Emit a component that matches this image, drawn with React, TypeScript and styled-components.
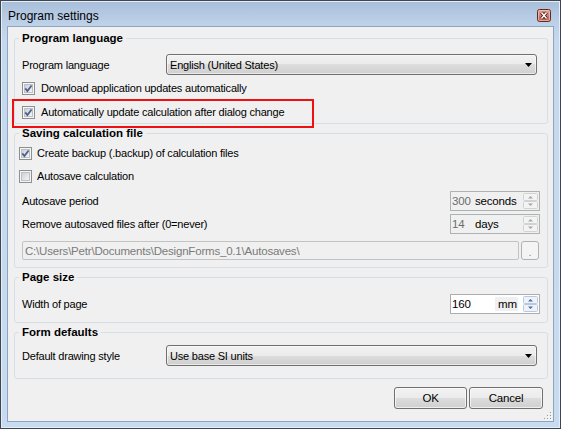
import styled, { createGlobalStyle } from "styled-components";

const GlobalStyle = createGlobalStyle`
  html, body {
    margin: 0;
    padding: 0;
    background: #ffffff;
  }
  body {
    font-family: "Liberation Sans", Arial, sans-serif;
    font-size: 11px;
    letter-spacing: -0.2px;
    color: #000000;
  }
`;

function CheckBox({ checked }: { checked: boolean }) {
  return (
    <svg width="13" height="13" viewBox="0 0 13 13">
      <defs>
        <linearGradient id="cbInner" x1="0" y1="0" x2="1" y2="1">
          <stop offset="0" stopColor="#c9cdd3" />
          <stop offset="1" stopColor="#f7f7f7" />
        </linearGradient>
      </defs>
      <rect x="0.5" y="0.5" width="12" height="12" fill="#f5f5f5" stroke="#8e8f8f" />
      <rect x="2.5" y="2.5" width="8" height="8" fill="url(#cbInner)" stroke="#bcc1c7" />
      {checked && (
        <path d="M3.3 6.4 L5.4 9 L9.6 3.4" fill="none" stroke="#4a5e8c" strokeWidth="1.7" />
      )}
    </svg>
  );
}

function SpinButtons({ active }: { active: boolean }) {
  const arrow = active ? "#4b6aa6" : "#a6a6a6";
  const edge = active ? "#b9c9dd" : "#d2d2d2";
  const fill = active ? "#eef3fa" : "#f3f3f3";
  return (
    <svg width="15" height="16" viewBox="0 0 15 16">
      <rect x="0.5" y="0.5" width="14" height="7" rx="1" fill={fill} stroke={edge} />
      <rect x="0.5" y="8.5" width="14" height="7" rx="1" fill={fill} stroke={edge} />
      <path d="M5 5.5 L10 5.5 L7.5 3 Z" fill={arrow} />
      <path d="M5 10.5 L10 10.5 L7.5 13 Z" fill={arrow} />
    </svg>
  );
}

function CloseGlyph() {
  return (
    <svg width="14" height="13" viewBox="0 0 14 13">
      <defs>
        <linearGradient id="closeFill" x1="0" y1="0" x2="0" y2="1">
          <stop offset="0" stopColor="#e6a497" />
          <stop offset="0.5" stopColor="#d27a6b" />
          <stop offset="1" stopColor="#c45c4c" />
        </linearGradient>
      </defs>
      <rect x="0.5" y="0.5" width="13" height="12" rx="2" fill="url(#closeFill)" stroke="#5d2a24" />
      <rect x="1.5" y="1.5" width="11" height="10" rx="1" fill="none" stroke="#f1c8c0" strokeOpacity="0.7" />
      <path d="M4.5 3.5 L9.5 9.5 M9.5 3.5 L4.5 9.5" stroke="#3b1713" strokeWidth="3.2" />
      <path d="M4.5 3.5 L9.5 9.5 M9.5 3.5 L4.5 9.5" stroke="#ffffff" strokeWidth="1.5" />
    </svg>
  );
}

function Grip() {
  const dots = [
    [6, 0],
    [3, 3], [6, 3],
    [0, 6], [3, 6], [6, 6],
  ];
  return (
    <svg width="8" height="8" viewBox="0 0 8 8">
      {dots.map(([x, y]) => (
        <g key={`${x}-${y}`}>
          <rect x={x + 1} y={y + 1} width="1" height="1" fill="#ffffff" />
          <rect x={x} y={y} width="1" height="1" fill="#9a9a9a" />
        </g>
      ))}
    </svg>
  );
}

function DropArrow() {
  return (
    <svg width="7" height="4" viewBox="0 0 7 4">
      <path d="M0 0 L7 0 L3.5 4 Z" fill="#000000" />
    </svg>
  );
}

interface SpinProps {
  value: string;
  unit: string;
  disabled?: boolean;
}

function Spin({ value, unit, disabled }: SpinProps) {
  return (
    <SpinBox $disabled={!!disabled}>
      <SpinValue $disabled={!!disabled}>{value}</SpinValue>
      <SpinUnit $boxed={!disabled}>{unit}</SpinUnit>
      <SpinButtons active={!disabled} />
    </SpinBox>
  );
}

export default function App() {
  return (
    <>
      <GlobalStyle />
      <Window>
        <TitleBar>
          <Title>Program settings</Title>
          <CloseButton>
            <CloseGlyph />
          </CloseButton>
        </TitleBar>
        <Client>
          <Group $mt={4} $pb={2}>
            <Legend>Program language</Legend>
            <Row $mt={9} $h={21}>
              <Label $w={147}>Program language</Label>
              <Select>
                <span>English (United States)</span>
                <DropArrow />
              </Select>
            </Row>
            <CheckRow $mt={4} $indent={3} $gap={6}>
              <CheckBox checked />
              <span>Download application updates automatically</span>
            </CheckRow>
            <CheckRow $mt={6} $indent={3} $gap={6} $marked>
              <CheckBox checked />
              <span>Automatically update calculation after dialog change</span>
            </CheckRow>
          </Group>

          <Group $mt={2} $pb={7}>
            <Legend>Saving calculation file</Legend>
            <CheckRow $mt={4} $indent={0} $gap={5}>
              <CheckBox checked />
              <span>Create backup (.backup) of calculation files</span>
            </CheckRow>
            <CheckRow $mt={5} $indent={0} $gap={5}>
              <CheckBox checked={false} />
              <span>Autosave calculation</span>
            </CheckRow>
            <Row $mt={6} $h={20}>
              <Label>Autosave period</Label>
              <Spin value="300" unit="seconds" disabled />
            </Row>
            <Row $mt={3} $h={20}>
              <Label>Remove autosaved files after (0=never)</Label>
              <Spin value="14" unit="days" disabled />
            </Row>
            <Row $mt={7} $h={19}>
              <PathBox>{"C:\\Users\\Petr\\Documents\\DesignForms_0.1\\Autosaves\\"}</PathBox>
              <BrowseButton>.</BrowseButton>
            </Row>
          </Group>

          <Group $mt={2} $pb={8}>
            <Legend>Page size</Legend>
            <Row $mt={10} $h={20}>
              <Label>Width of page</Label>
              <Spin value="160" unit="mm" />
            </Row>
          </Group>

          <Group $mt={2} $pb={12}>
            <Legend>Form defaults</Legend>
            <Row $mt={6} $h={21}>
              <Label $w={147}>Default drawing style</Label>
              <Select>
                <span>Use base SI units</span>
                <DropArrow />
              </Select>
            </Row>
          </Group>

          <ButtonBar>
            <DialogButton $w={73}>OK</DialogButton>
            <DialogButton $w={74}>Cancel</DialogButton>
          </ButtonBar>
          <GripCorner>
            <Grip />
          </GripCorner>
        </Client>
      </Window>
    </>
  );
}

const Window = styled.div`
  width: 561px;
  height: 429px;
  box-sizing: border-box;
  border: 1px solid #3f4650;
  padding: 0 6px 6px 6px;
  display: flex;
  flex-direction: column;
  background: linear-gradient(#a8bed9 0px, #bcd0e8 22px, #c4d8ee 40px, #c8dcf1 100%);
  box-shadow: inset 0 0 0 1px #e4eef8;
`;

const TitleBar = styled.div`
  height: 25px;
  display: flex;
  align-items: flex-end;
  justify-content: space-between;
  padding: 0 3px 3px 1px;
  box-sizing: border-box;
`;

const Title = styled.div`
  font-size: 12px;
  line-height: 14px;
  letter-spacing: 0;
  color: #000000;
`;

const CloseButton = styled.div`
  width: 14px;
  height: 13px;
  margin-bottom: 1px;
  line-height: 0;
`;

const Client = styled.div`
  position: relative;
  flex: 1;
  display: flex;
  flex-direction: column;
  background: #f0f0f0;
  border: 1px solid #8ea4bf;
  padding: 0 5px 0 6px;
`;

const Group = styled.fieldset<{ $mt: number; $pb: number }>`
  margin: ${(p) => p.$mt}px 0 0 0;
  min-width: 0;
  border: 1px solid #d5dfe5;
  border-radius: 3px;
  padding: 0 7px ${(p) => p.$pb}px 4px;
  display: flex;
  flex-direction: column;
`;

const Legend = styled.legend`
  padding: 0 3px;
  font-weight: bold;
  font-size: 11.5px;
  line-height: 14px;
  letter-spacing: 0;
  color: #000000;
`;

const Row = styled.div<{ $mt: number; $h: number }>`
  margin-top: ${(p) => p.$mt}px;
  height: ${(p) => p.$h}px;
  display: flex;
  align-items: center;
`;

const CheckRow = styled.div<{ $mt: number; $indent: number; $gap: number; $marked?: boolean }>`
  position: relative;
  margin-top: ${(p) => p.$mt}px;
  height: 18px;
  display: flex;
  align-items: center;
  gap: ${(p) => p.$gap}px;
  padding-left: ${(p) => p.$indent}px;

  svg {
    flex: none;
  }

  ${(p) =>
    p.$marked &&
    `
    &::after {
      content: "";
      position: absolute;
      left: -7px;
      top: -4px;
      width: 302px;
      height: 29px;
      box-sizing: border-box;
      border: 2px solid #ee1111;
      pointer-events: none;
    }
  `}
`;

const Label = styled.div<{ $w?: number }>`
  padding-left: 3px;
  ${(p) => (p.$w ? `width: ${p.$w}px; flex: none;` : "flex: 1;")}
  box-sizing: border-box;
  white-space: nowrap;
`;

const Select = styled.div`
  flex: 1;
  height: 21px;
  margin-right: 3px;
  box-sizing: border-box;
  border: 1px solid #707070;
  border-radius: 3px;
  background: linear-gradient(#f2f2f2 0%, #ebebeb 50%, #dddddd 50%, #cfcfcf 100%);
  box-shadow: inset 0 0 0 1px rgba(252, 252, 252, 0.6);
  display: flex;
  align-items: center;
  justify-content: space-between;
  padding: 0 4px 0 3px;
`;

const SpinBox = styled.div<{ $disabled: boolean }>`
  width: 90px;
  height: 20px;
  box-sizing: border-box;
  border: 1px solid ${(p) => (p.$disabled ? "#adb2b5" : "#abadb3")};
  background: ${(p) => (p.$disabled ? "#f0f0f0" : "#ffffff")};
  display: flex;
  align-items: center;
  padding: 0 1px 0 1px;
`;

const SpinValue = styled.div<{ $disabled: boolean }>`
  width: 23px;
  color: ${(p) => (p.$disabled ? "#6d6d6d" : "#000000")};
  font-size: 11.5px;
`;

const SpinUnit = styled.div<{ $boxed: boolean }>`
  flex: 1;
  display: flex;
  align-items: center;
  font-size: 11.5px;
  ${(p) =>
    p.$boxed
      ? `
    margin-left: 20px;
    margin-right: 5px;
    height: 14px;
    background: #f0f0f0;
    padding-left: 3px;
  `
      : ""}
`;

const PathBox = styled.div`
  flex: 1;
  height: 19px;
  margin-left: 3px;
  box-sizing: border-box;
  border: 1px solid #c3c3c3;
  border-radius: 2px;
  background: #f0f0f0;
  color: #7a7a7a;
  font-size: 11.5px;
  display: flex;
  align-items: center;
  padding-left: 2px;
  white-space: nowrap;
  overflow: hidden;
`;

const BrowseButton = styled.div`
  width: 18px;
  height: 19px;
  margin-left: 2px;
  margin-right: 1px;
  box-sizing: border-box;
  border: 1px solid #adb2b5;
  border-radius: 3px;
  background: #f4f4f4;
  color: #8d8d8d;
  display: flex;
  align-items: flex-end;
  justify-content: center;
  line-height: 14px;
`;

const ButtonBar = styled.div`
  margin-top: 8px;
  margin-right: 5px;
  display: flex;
  justify-content: flex-end;
  gap: 2px;
`;

const DialogButton = styled.div<{ $w: number }>`
  width: ${(p) => p.$w}px;
  height: 22px;
  box-sizing: border-box;
  border: 1px solid #707070;
  border-radius: 3px;
  background: linear-gradient(#f2f2f2 0%, #ebebeb 50%, #dddddd 50%, #cfcfcf 100%);
  box-shadow: inset 0 0 0 1px rgba(252, 252, 252, 0.7);
  display: flex;
  align-items: center;
  justify-content: center;
  font-size: 11.5px;
`;

const GripCorner = styled.div`
  position: absolute;
  right: 1px;
  bottom: 1px;
  line-height: 0;
`;
